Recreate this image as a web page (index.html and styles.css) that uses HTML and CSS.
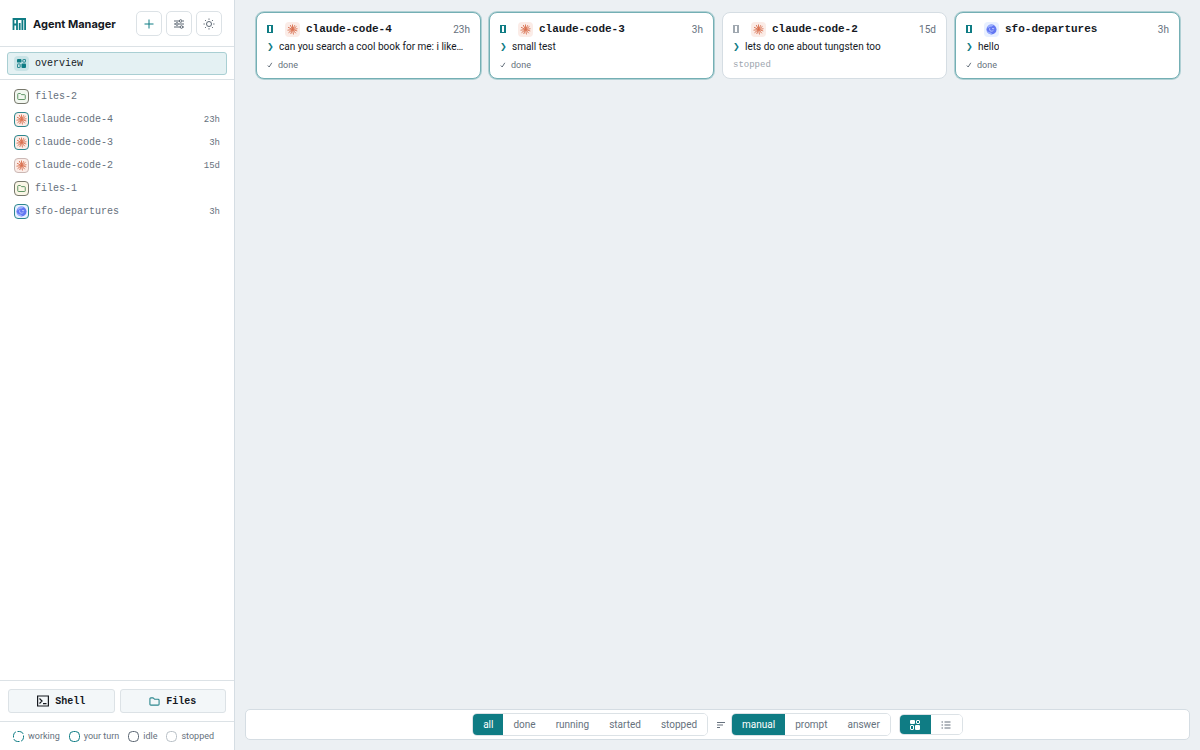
FILE: index.html
```html
<!DOCTYPE html>
<html lang="en">
<head>
    <meta charset="UTF-8">
    <meta name="viewport" content="width=device-width, initial-scale=1.0">
    <title>Agent Manager</title>
    <link rel="stylesheet" href="styles.css">
</head>
<body>

<!-- shared icons -->
<svg class="defs" aria-hidden="true">
    <symbol id="burst" viewBox="0 0 24 24">
        <path fill="none" stroke="#d9704f" stroke-width="2" stroke-linecap="round" d="M12 12V2M12 12l4.6-8.6M12 12l8-6.2M12 12l10-1.6M12 12l9.6 3M12 12l6.6 7.6M12 12l2 10M12 12l-3.6 9M12 12l-8 6.6M12 12l-10 1.4M12 12L3 7.4M12 12L7.4 3"/>
    </symbol>
    <symbol id="orb" viewBox="0 0 24 24">
        <circle cx="12" cy="12" r="11" fill="#6377f2"/>
        <path fill="#9bb0ff" d="M4 6c3-5 9-6 13-3-3 0-4 3-7 3-2 0-4 2-7 4zM2 14c2 1 3 4 6 4s4 3 6 4C8 23 3 20 2 14z"/>
        <path fill="none" stroke="#d5ddff" stroke-width="1.6" stroke-linecap="round" d="M8 10v3c0 3 6 4 8 1M14 10h3"/>
    </symbol>
    <symbol id="folder" viewBox="0 0 24 24">
        <path fill="none" stroke="currentColor" stroke-width="2.4" stroke-linejoin="round" d="M2 6a2 2 0 0 1 2-2h5l3 3h8a2 2 0 0 1 2 2v9a2 2 0 0 1-2 2H4a2 2 0 0 1-2-2z"/>
    </symbol>
    <symbol id="tiles" viewBox="0 0 20 20">
        <g fill="currentColor">
            <rect x="10" y="10" width="10" height="10" rx="2"/>
            <rect width="10" height="8" rx="2"/>
        </g>
        <g fill="none" stroke="currentColor" stroke-width="2">
            <rect x="13" y="1" width="6" height="6" rx="1"/>
            <rect x="1" y="11" width="6" height="8" rx="1"/>
        </g>
    </symbol>
</svg>

<aside class="sidebar">
    <header class="brand">
        <svg class="logo" viewBox="0 0 14 12" aria-hidden="true">
            <path fill="none" stroke="#0f7c84" stroke-width="1.8" d="M1.500 12V1h3.500V12M1.500 6.500h3.500M5 1h8.100V12M7.700 5v7M10.400 1v11"/>
        </svg>
        <h1>Agent Manager</h1>
        <div class="tools">
            <button class="tool add" aria-label="New agent">
                <svg viewBox="0 0 12 12"><path d="M6 1.5v9M1.5 6h9"/></svg>
            </button>
            <button class="tool" aria-label="Settings">
                <svg viewBox="0 0 12 12"><path d="M1 3h5M9.500 3H11M1 6h1.500M6 6h5M1 9h6M10 9h1"/><circle cx="7.700" cy="3" r="1.300"/><circle cx="4" cy="6" r="1.300"/><circle cx="8.500" cy="9" r="1.300"/></svg>
            </button>
            <button class="tool" aria-label="Theme">
                <svg viewBox="0 0 12 12"><circle cx="6" cy="6" r="2.500"/><path d="M6 .5v1.300M6 10.200v1.300M.5 6h1.300M10.200 6h1.300M2.100 2.100l1 1M8.900 8.900l1 1M2.100 9.900l1-1M8.900 3.100l1-1"/></svg>
            </button>
        </div>
    </header>

    <nav class="pinned">
        <a class="item active" href="#"><span class="badge overview"><svg><use href="#tiles"/></svg></span><span class="name">overview</span></a>
    </nav>

    <nav class="sessions">
        <a class="item" href="#"><span class="badge files"><svg><use href="#folder"/></svg></span><span class="name">files-2</span></a>
        <a class="item" href="#"><span class="badge claude turn"><svg><use href="#burst"/></svg></span><span class="name">claude-code-4</span><time>23h</time></a>
        <a class="item" href="#"><span class="badge claude turn"><svg><use href="#burst"/></svg></span><span class="name">claude-code-3</span><time>3h</time></a>
        <a class="item" href="#"><span class="badge claude stopped"><svg><use href="#burst"/></svg></span><span class="name">claude-code-2</span><time>15d</time></a>
        <a class="item" href="#"><span class="badge files sand"><svg><use href="#folder"/></svg></span><span class="name">files-1</span></a>
        <a class="item" href="#"><span class="badge sfo turn"><svg><use href="#orb"/></svg></span><span class="name">sfo-departures</span><time>3h</time></a>
    </nav>

    <div class="launch">
        <button>
            <svg viewBox="0 0 12 12"><path fill="none" stroke="currentColor" stroke-width="1.200" d="M.6 1h10.800v10H.6zM2.500 3.500L5 6 2.500 8.500M6 8.700h3.500"/></svg>
            Shell
        </button>
        <button>
            <svg class="teal"><use href="#folder"/></svg>
            Files
        </button>
    </div>

    <div class="legend">
        <span><svg class="dot working" viewBox="0 0 11 11"><rect x=".5" y=".5" width="10" height="10" rx="4" pathLength="40" stroke-dasharray="8 2"/></svg>working</span>
        <span><svg class="dot" viewBox="0 0 11 11"><rect x=".5" y=".5" width="10" height="10" rx="4"/></svg>your turn</span>
        <span><svg class="dot idle" viewBox="0 0 11 11"><rect x=".5" y=".5" width="10" height="10" rx="4"/></svg>idle</span>
        <span><svg class="dot off" viewBox="0 0 11 11"><rect x=".5" y=".5" width="10" height="10" rx="4"/></svg>stopped</span>
    </div>
</aside>

<main class="main">
    <section class="cards">
        <article class="card turn">
            <div class="card-head"><i class="state"></i><span class="badge claude"><svg><use href="#burst"/></svg></span><h2>claude-code-4</h2><time>23h</time></div>
            <p class="prompt"><b>❯</b><span>can you search a cool book for me: i like…</span></p>
            <p class="status"><svg viewBox="0 0 6 6"><path d="M.8 3.500L2.200 5 4.800.8"/></svg>done</p>
        </article>
        <article class="card turn">
            <div class="card-head"><i class="state"></i><span class="badge claude"><svg><use href="#burst"/></svg></span><h2>claude-code-3</h2><time>3h</time></div>
            <p class="prompt"><b>❯</b><span>small test</span></p>
            <p class="status"><svg viewBox="0 0 6 6"><path d="M.8 3.500L2.200 5 4.800.8"/></svg>done</p>
        </article>
        <article class="card">
            <div class="card-head"><i class="state off"></i><span class="badge claude"><svg><use href="#burst"/></svg></span><h2>claude-code-2</h2><time>15d</time></div>
            <p class="prompt"><b>❯</b><span>lets do one about tungsten too</span></p>
            <p class="status stopped">stopped</p>
        </article>
        <article class="card turn">
            <div class="card-head"><i class="state"></i><span class="badge sfo"><svg><use href="#orb"/></svg></span><h2>sfo-departures</h2><time>3h</time></div>
            <p class="prompt"><b>❯</b><span>hello</span></p>
            <p class="status"><svg viewBox="0 0 6 6"><path d="M.8 3.500L2.200 5 4.800.8"/></svg>done</p>
        </article>
    </section>

    <footer class="toolbar">
        <div class="segmented filter">
            <button class="on">all</button>
            <button>done</button>
            <button>running</button>
            <button>started</button>
            <button>stopped</button>
        </div>
        <svg class="sort" viewBox="0 0 8 8" aria-hidden="true"><path d="M0 1.500h8M0 4h6M0 6.500h3"/></svg>
        <div class="segmented">
            <button class="on">manual</button>
            <button>prompt</button>
            <button>answer</button>
        </div>
        <div class="segmented view">
            <button class="on" aria-label="Grid view"><svg><use href="#tiles"/></svg></button>
            <button aria-label="List view"><svg viewBox="0 0 10 10"><path fill="none" stroke="currentColor" d="M.5 2H2M3.500 2h6M.5 5H2M3.500 5h6M.5 8H2M3.500 8h6"/></svg></button>
        </div>
    </footer>
</main>

</body>
</html>
```
FILE: styles.css
```css
* {
    box-sizing: border-box;
}
body {
    margin: 0;
    display: flex;
    height: 100vh;
    background: #ecf0f3;
    color: #15191f;
    font-family: Roboto, "Liberation Sans", sans-serif;
    font-size: 10px;
}
h1, h2, p {
    margin: 0;
}
button {
    font: inherit;
    color: inherit;
    cursor: pointer;
}
a {
    color: inherit;
    text-decoration: none;
}
svg {
    display: block;
    flex: none;
}
.defs {
    display: none;
}

/* sidebar */
.sidebar {
    width: 235px;
    flex: none;
    display: flex;
    flex-direction: column;
    background: #fff;
    border-right: 1px solid #d5dde3;
}
.brand {
    display: flex;
    align-items: center;
    padding: 11px 12px 10px;
    border-bottom: 1px solid #dce2e6;
}
.logo {
    width: 14px;
    height: 12px;
}
.brand h1 {
    margin-left: 7px;
    font-family: Inter, sans-serif;
    font-size: 11px;
    font-weight: 700;
    white-space: nowrap;
}
.tools {
    display: flex;
    gap: 4px;
    margin-left: auto;
}
.tool {
    display: grid;
    place-items: center;
    width: 26px;
    height: 25px;
    padding: 0;
    background: #fff;
    border: 1px solid #dce2e6;
    border-radius: 5px;
    color: #5c6773;
}
.tool svg {
    width: 12px;
    height: 12px;
    fill: none;
    stroke: currentColor;
}
.tool.add {
    color: #0f7c84;
}
.pinned {
    padding: 5px 7px 4px;
    border-bottom: 1px solid #dce2e6;
}
.sessions {
    flex: 1;
    padding: 5px 7px;
}
.item {
    display: flex;
    align-items: center;
    height: 23px;
    padding: 0 7px;
    color: #66717d;
    font-family: "Liberation Mono", monospace;
}
.item.active {
    padding: 0 6px;
    background: #e4f1f3;
    border: 1px solid #a9cfd3;
    border-radius: 3px;
    color: #15191f;
}
.item .name {
    margin-left: 6px;
}
.item time {
    margin-left: auto;
    font-size: 9px;
}
.badge {
    display: grid;
    place-items: center;
    flex: none;
    width: 15px;
    height: 15px;
    border-radius: 4px;
}
.badge svg {
    width: 11px;
    height: 11px;
}
.badge.overview {
    background: #c9e3e6;
    color: #0f7c84;
}
.badge.overview svg {
    width: 9px;
    height: 9px;
}
.badge.files {
    background: #f2f7f0;
    border: 1px solid #77786c;
    color: #4f8a58;
}
.badge.files svg {
    width: 9px;
    height: 9px;
}
.badge.sand {
    background: #faf6e6;
}
.badge.claude {
    background: #fbece7;
}
.badge.sfo {
    background: #e8f0ff;
}
.badge.turn {
    border: 1px solid #2c878e;
}
.badge.stopped {
    border: 1px solid #cbb8b5;
}
.launch {
    display: flex;
    gap: 5px;
    padding: 8px;
    border-top: 1px solid #dce2e6;
    border-bottom: 1px solid #dce2e6;
}
.launch button {
    flex: 1;
    display: flex;
    align-items: center;
    justify-content: center;
    gap: 6px;
    height: 24px;
    background: #f3f7f9;
    border: 1px solid #dce2e6;
    border-radius: 3px;
    font-family: "Liberation Mono", monospace;
    font-weight: 700;
}
.launch svg {
    width: 12px;
    height: 12px;
}
.launch .teal {
    width: 11px;
    height: 11px;
    color: #2c878e;
}
.legend {
    display: flex;
    gap: 9px;
    height: 28px;
    padding: 0 13px;
    color: #66717d;
    font-size: 9px;
}
.legend span {
    display: flex;
    align-items: center;
    gap: 4px;
    white-space: nowrap;
}
.dot {
    width: 11px;
    height: 11px;
    fill: none;
    stroke: #0f7c84;
}
.dot.idle {
    stroke: #5c6773;
}
.dot.off {
    stroke: #b9c0c7;
}

/* cards */
.main {
    flex: 1;
    min-width: 0;
    display: flex;
    flex-direction: column;
    padding: 12px 10px;
}
.cards {
    flex: 1;
    display: grid;
    grid-template-columns: repeat(4, minmax(0, 1fr));
    align-content: start;
    gap: 8px;
    padding: 0 10px 0 11px;
}
.card {
    padding: 8px 10px 5px;
    background: #fff;
    border: 1px solid #d5dde3;
    border-radius: 8px;
}
.card.turn {
    border-color: #74afb4;
    box-shadow: 0 0 0 1px #b0d0d4;
}
.card-head {
    display: flex;
    align-items: center;
    height: 16px;
}
.state {
    width: 6px;
    height: 8px;
    margin-right: 12px;
    border: solid #0f7c84;
    border-width: 1px 2px;
}
.state.off {
    border-color: #a0a8b0;
}
.card h2 {
    margin-left: 6px;
    font-family: "Liberation Mono", monospace;
    font-size: 11px;
}
.card time {
    margin-left: auto;
    color: #66717d;
}
.prompt {
    display: flex;
    line-height: 18px;
    margin-top: 1px;
}
.prompt b {
    width: 12px;
    flex: none;
    color: #0f7c84;
    font-family: "DejaVu Sans", sans-serif;
    font-size: 8px;
}
.prompt span {
    overflow: hidden;
    text-overflow: ellipsis;
    white-space: nowrap;
}
.status {
    display: flex;
    align-items: center;
    height: 17px;
    gap: 5px;
    color: #66717d;
    font-size: 9px;
}
.status svg {
    width: 6px;
    height: 6px;
    fill: none;
    stroke: currentColor;
}
.status.stopped {
    color: #9ba4ad;
    font-family: "Liberation Mono", monospace;
}

/* bottom bar */
.main {
    padding-bottom: 10px;
}
.toolbar {
    display: flex;
    align-items: center;
    justify-content: center;
    height: 31px;
    background: #fff;
    border: 1px solid #d5dde3;
    border-radius: 5px;
}
.segmented {
    display: flex;
    overflow: hidden;
    border: 1px solid #dce2e6;
    border-radius: 5px;
}
.segmented button {
    display: grid;
    place-items: center;
    height: 21px;
    padding: 0 10px;
    background: #fff;
    border: 0;
    color: #66717d;
}
.segmented .on {
    background: #0f7c84;
    color: #fff;
}
.sort {
    width: 8px;
    height: 8px;
    margin: 0 6px 0 9px;
    fill: none;
    stroke: #66717d;
}
.segmented.view {
    margin-left: 8px;
}
.segmented.view button {
    width: 31px;
    height: 19px;
}
.view svg {
    width: 10px;
    height: 10px;
}
```
